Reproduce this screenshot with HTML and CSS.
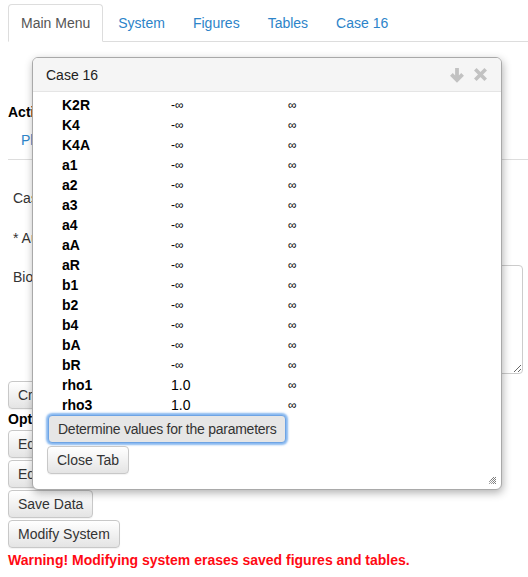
FILE: index.html
```html
<!DOCTYPE html>
<html>
<head>
<meta charset="utf-8">
<link rel="stylesheet" href="styles.css">
</head>
<body>
<div class="page">
  <ul class="tabs">
    <li class="tab active">Main Menu</li>
    <li class="tab">System</li>
    <li class="tab">Figures</li>
    <li class="tab">Tables</li>
    <li class="tab">Case 16</li>
  </ul>
  <div class="main">
    <div class="heading">Actions</div>
    <div class="pill">Plot</div>
    <hr class="rule">
    <div class="form">
      <div class="frow">Case:</div>
      <div class="frow spaced">* Aux</div>
      <div class="frow area-row">
        <span class="flabel">Bios</span>
        <textarea class="area"></textarea>
      </div>
    </div>
    <div class="btns first">
      <button class="btn">Cre</button>
    </div>
    <div class="heading">Options</div>
    <div class="btns">
      <button class="btn">Edit</button>
      <button class="btn">Edit</button>
      <button class="btn">Save Data</button>
      <button class="btn">Modify System</button>
    </div>
    <div class="warning">Warning! Modifying system erases saved figures and tables.</div>
  </div>

  <div class="dialog">
    <div class="dlg-head">
      <span class="dlg-title">Case 16</span>
      <span class="dlg-icons">
        <svg class="ico" width="16" height="16" viewBox="0 0 16 16"><path d="M8 1V12.5M2.4 7.4L8 13L13.6 7.4" fill="none" stroke="#c2c2c2" stroke-width="3.8" stroke-linejoin="miter"/></svg>
        <svg class="ico" width="15" height="15" viewBox="0 0 15 15"><path d="M2.3 2.3L12.7 12.7M12.7 2.3L2.3 12.7" fill="none" stroke="#c2c2c2" stroke-width="3.6"/></svg>
      </span>
    </div>
    <div class="dlg-body">
      <div class="params">
        <div class="prow"><b>K2R</b><span class="inf">-∞</span><span class="inf">∞</span></div>
        <div class="prow"><b>K4</b><span class="inf">-∞</span><span class="inf">∞</span></div>
        <div class="prow"><b>K4A</b><span class="inf">-∞</span><span class="inf">∞</span></div>
        <div class="prow"><b>a1</b><span class="inf">-∞</span><span class="inf">∞</span></div>
        <div class="prow"><b>a2</b><span class="inf">-∞</span><span class="inf">∞</span></div>
        <div class="prow"><b>a3</b><span class="inf">-∞</span><span class="inf">∞</span></div>
        <div class="prow"><b>a4</b><span class="inf">-∞</span><span class="inf">∞</span></div>
        <div class="prow"><b>aA</b><span class="inf">-∞</span><span class="inf">∞</span></div>
        <div class="prow"><b>aR</b><span class="inf">-∞</span><span class="inf">∞</span></div>
        <div class="prow"><b>b1</b><span class="inf">-∞</span><span class="inf">∞</span></div>
        <div class="prow"><b>b2</b><span class="inf">-∞</span><span class="inf">∞</span></div>
        <div class="prow"><b>b4</b><span class="inf">-∞</span><span class="inf">∞</span></div>
        <div class="prow"><b>bA</b><span class="inf">-∞</span><span class="inf">∞</span></div>
        <div class="prow"><b>bR</b><span class="inf">-∞</span><span class="inf">∞</span></div>
        <div class="prow"><b>rho1</b><span>1.0</span><span class="inf">∞</span></div>
        <div class="prow"><b>rho3</b><span>1.0</span><span class="inf">∞</span></div>
      </div>
      <div class="dlg-btns">
        <button class="btn focus">Determine values for the parameters</button>
        <button class="btn">Close Tab</button>
      </div>
    </div>
    <svg class="grip" width="9" height="9" viewBox="0 0 9 9"><path d="M8 1L1 8M8 3L3 8M8 5L5 8M8 7L7 8M6 1L1 6" stroke="#333" stroke-width="0.9" fill="none" stroke-dasharray="1 0.6"/></svg>
  </div>
</div>
</body>
</html>
```
FILE: styles.css
```css
html, body {
  margin: 0;
  padding: 0;
  overflow: hidden;
  background: #fff;
}
body {
  font-family: "Liberation Sans", Arial, sans-serif;
  font-size: 14px;
  line-height: 20px;
  color: #333;
}
.page {
  position: relative;
  padding-left: 8px;
  height: 577px;
}
.tabs {
  list-style: none;
  margin: 0;
  padding: 4px 0 0 0;
  display: flex;
  border-bottom: 1px solid #ddd;
}
.tab {
  padding: 8px 12px;
  margin-right: 2px;
  margin-bottom: -1px;
  border: 1px solid transparent;
  border-radius: 4px 4px 0 0;
  color: #2d84c9;
  line-height: 20px;
}
.tab.active {
  color: #555;
  background: #fff;
  border-color: #ddd #ddd transparent #ddd;
}
.main {
  padding-top: 60px;
}
.heading {
  font-weight: bold;
  color: #000;
}
.pill {
  margin-top: 8px;
  padding-left: 13px;
  color: #2d84c9;
}
.rule {
  border: 0;
  border-top: 1px solid #ddd;
  margin: 9px 0 0 0;
}
.form {
  padding-left: 5px;
  padding-top: 28px;
}
.frow.spaced {
  margin-top: 20px;
}
.area-row {
  display: flex;
  align-items: flex-start;
  margin-top: 17px;
}
.flabel {
  width: 140px;
  padding-top: 2px;
}
.area {
  flex: 1;
  height: 109px;
  box-sizing: border-box;
  margin: 0 5px 0 0;
  border: 1px solid #ccc;
  border-radius: 4px;
}
.btns {
  display: flex;
  flex-direction: column;
  align-items: flex-start;
  gap: 2px;
}
.btns.first {
  margin-top: 7px;
}
.heading + .btns {
  margin-top: 1px;
}
.btn {
  font-family: "Liberation Sans", Arial, sans-serif;
  font-size: 14px;
  line-height: 20px;
  color: #333;
  padding: 3px 9px;
  border: 1px solid #c8c8c8;
  border-radius: 4px;
  background: linear-gradient(#ffffff, #e4e4e4);
  box-shadow: inset 0 1px 0 rgba(255,255,255,.2), 0 1px 1px rgba(0,0,0,.05);
  margin: 0;
}
.warning {
  margin-top: 2px;
  color: #ff0a14;
  font-weight: bold;
  font-size: 14px;
}
.dialog {
  position: absolute;
  left: 32px;
  top: 57px;
  width: 470px;
  height: 433px;
  box-sizing: border-box;
  border: 1px solid #a9a9a9;
  border-radius: 6px;
  background: #fff;
  box-shadow: 1px 3px 8px rgba(0,0,0,.3);
  overflow: hidden;
}
.dlg-head {
  height: 34px;
  box-sizing: border-box;
  background: #f5f5f5;
  border-bottom: 1px solid #e5e5e5;
  display: flex;
  align-items: center;
  justify-content: space-between;
  padding: 0 13px 0 13px;
  color: #222;
}
.dlg-icons {
  display: flex;
  align-items: center;
  gap: 8px;
}
.ico {
  display: block;
}
.dlg-body {
  padding: 3px 14px 0 14px;
}
.params {
  padding-left: 15px;
}
.prow {
  display: grid;
  grid-template-columns: 109px 117px auto;
  height: 20px;
  color: #000;
}
.inf {
  font-size: 12px;
}
.dlg-btns {
  display: flex;
  flex-direction: column;
  align-items: flex-start;
  gap: 3px;
  margin-top: 0;
}
.btn.focus {
  background: #e6e6e6;
  border-color: #6ea4e4;
  box-shadow: 0 0 2px 2px rgba(95,160,235,.75);
  margin-left: 1px;
  letter-spacing: -0.25px;
}
.grip {
  position: absolute;
  right: 4px;
  bottom: 4px;
}
```
